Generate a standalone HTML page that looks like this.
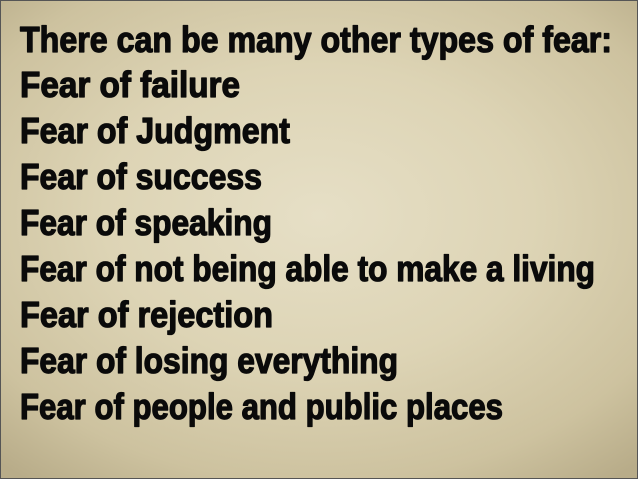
<!DOCTYPE html>
<html><head><meta charset="utf-8"><style>
html,body{margin:0;padding:0}
body{width:638px;height:479px;overflow:hidden;background:#555}
.s{position:absolute;left:1px;top:1px;width:636px;height:477px;
background:radial-gradient(ellipse 75% 70% at 50% 45%,#e6dfc6 0%,#ddd4b5 45%,#cdc29f 80%,#b8ac89 100%)}
svg{position:absolute;left:0;top:0}
text{font-family:"Liberation Sans",sans-serif;font-weight:bold;font-size:36px;fill:#0a0a0a;stroke:#0a0a0a;stroke-width:1.3;stroke-linejoin:round}
</style></head><body><div class="s"></div>
<svg width="638" height="479">
<text x="20" y="52" textLength="592" lengthAdjust="spacingAndGlyphs">There can be many other types of fear:</text>
<text x="20" y="97" textLength="220" lengthAdjust="spacingAndGlyphs">Fear of failure</text>
<text x="20" y="143" textLength="270" lengthAdjust="spacingAndGlyphs">Fear of Judgment</text>
<text x="20" y="189" textLength="242" lengthAdjust="spacingAndGlyphs">Fear of success</text>
<text x="20" y="235" textLength="252" lengthAdjust="spacingAndGlyphs">Fear of speaking</text>
<text x="20" y="281" textLength="575" lengthAdjust="spacingAndGlyphs">Fear of not being able to make a living</text>
<text x="20" y="327" textLength="253" lengthAdjust="spacingAndGlyphs">Fear of rejection</text>
<text x="20" y="373" textLength="378" lengthAdjust="spacingAndGlyphs">Fear of losing everything</text>
<text x="20" y="419" textLength="483" lengthAdjust="spacingAndGlyphs">Fear of people and public places</text>
</svg></body></html>
